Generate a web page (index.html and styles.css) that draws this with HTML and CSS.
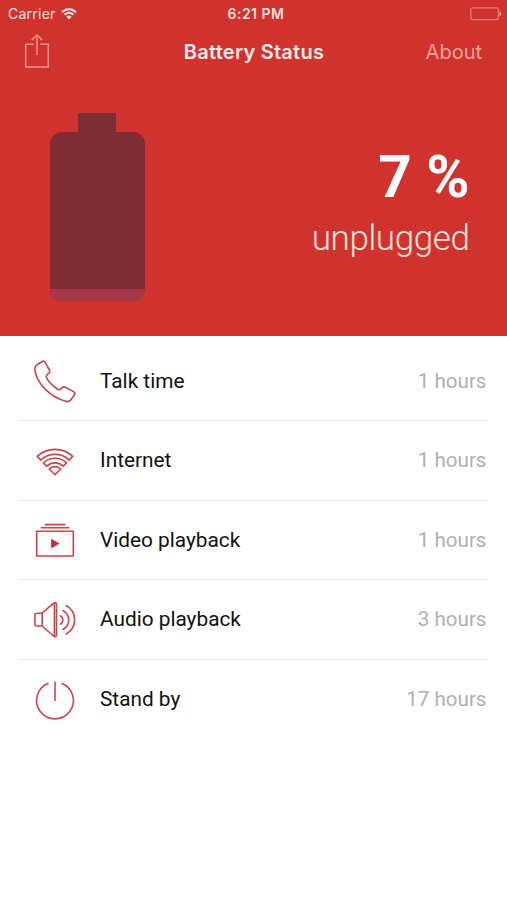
FILE: index.html
```html
<!DOCTYPE html>
<html lang="en">
<head>
<meta charset="utf-8">
<title>Battery Status</title>
<link rel="stylesheet" href="styles.css">
</head>
<body>
<header class="hero">
  <div class="status">
    <div class="carrier"><span>Carrier</span>
      <svg width="16" height="12" viewBox="0 0 16 12" fill="none" stroke="currentColor" stroke-width="2"><path d="M1 4.2Q8-2 15 4.2M3.5 6.8Q8 2.8 12.5 6.8"/><path d="M5.4 8.7Q8 6.5 10.6 8.7L8 11.4Z" fill="currentColor" stroke="none"/></svg>
    </div>
    <div class="clock">6:21 PM</div>
    <svg class="cell" width="32" height="14" viewBox="0 0 32 14" fill="none"><rect x=".8" y=".8" width="27.6" height="11.8" rx="2" stroke="#f07a76" stroke-width="1.2"/><path d="M29.5 4.5Q31.2 5 31.2 6.7T29.5 9Z" fill="#ffc5bd"/></svg>
  </div>
  <nav class="nav">
    <svg class="share" width="26" height="36" viewBox="0 0 26 36" fill="none" stroke="#f6938c" stroke-width="1.5"><path d="M9.8 11.3H1.7V34H24.3V11.3H16.2M13 22V2M7.7 7.2L13 1.8L18.3 7.2"/></svg>
    <h1 class="title">Battery Status</h1>
    <a class="about">About</a>
  </nav>
  <div class="summary">
    <div class="battery"><div class="cap"></div><div class="body"><div class="level"></div></div></div>
    <div class="reading"><div class="percent">7 %</div><div class="state">unplugged</div></div>
  </div>
</header>
<main class="list">
  <div class="row">
    <svg class="icon" viewBox="0 0 50 50"><path d="M12.3 5.5L7.8 8.2Q5 10 4.7 13.2C6.5 28 21 41.5 36.5 45.6Q39.7 46 41.5 43L44.5 38.8Q45.6 37 43.6 35.6L35.5 31.2Q33.7 30.3 32 31.8L30.5 33.2Q29 34.3 27.2 33C23 30 18.5 25.7 16.4 21.7Q15.8 20 17.2 18.7L19 17Q20.2 15.8 19.5 14L15 6.3Q13.9 4.6 12.3 5.5Z"/></svg>
    <span class="name">Talk time</span><span class="time">1 hours</span>
  </div>
  <div class="row">
    <svg class="icon" viewBox="0 0 50 50"><path d="M7.3 20.4A25.7 25.7 0 0 1 42.7 20.4L39.2 24.1A20.6 20.6 0 0 0 10.8 24.1ZM13.5 26.9A16.7 16.7 0 0 1 36.5 26.9L33.3 30.2A12.1 12.1 0 0 0 16.7 30.2ZM19.2 33A8.3 8.3 0 0 1 30.8 33L25 38.7Z"/></svg>
    <span class="name">Internet</span><span class="time">1 hours</span>
  </div>
  <div class="row">
    <svg class="icon" viewBox="0 0 50 50"><path d="M6.7 16.2H43.3V41H6.7ZM10.8 12.7H39.7M14.7 9.6H35.5"/><path class="solid" d="M21.2 23.7V33.5L29.6 28.6Z"/></svg>
    <span class="name">Video playback</span><span class="time">1 hours</span>
  </div>
  <div class="row">
    <svg class="icon" viewBox="0 0 50 50"><path d="M6.8 18.2H12.2V31H6.8Q4.9 31 4.9 29V20.2Q4.9 18.2 6.8 18.2ZM12.2 18.2L23.5 8.2Q26.5 6.5 26.5 9.5V39.7Q26.5 42.7 23.5 41L12.2 31M24.4 7.5V41.5M30 20.5Q32.8 22 32.8 25T30 29.5M32.5 15.2Q38.7 18.5 38.7 25T32.5 34.8M35.8 10.2C47.5 16.5 47.5 33 35.8 39.2"/></svg>
    <span class="name">Audio playback</span><span class="time">3 hours</span>
  </div>
  <div class="row">
    <svg class="icon" viewBox="0 0 50 50"><path d="M18.5 8.3A18.4 18.4 0 1 0 31.5 8.3M25 6.7V26"/></svg>
    <span class="name">Stand by</span><span class="time">17 hours</span>
  </div>
</main>
</body>
</html>
```
FILE: styles.css
```css
* { box-sizing: border-box; }
body { margin: 0; background: #fff; color: #111; font-family: Roboto, sans-serif; }
.hero { height: 335.5px; background: #d0322e; color: #fff; overflow: hidden; }
.status { height: 27px; display: grid; grid-template-columns: 1fr auto 1fr; align-items: center; padding: 0 5px 0 8px; font: 500 13px/27px Inter, sans-serif; color: #ffe0da; }
.carrier { display: flex; align-items: center; gap: 5px; font-weight: 400; font-size: 14px; letter-spacing: .25px; }
.clock { font-weight: 600; font-size: 14px; letter-spacing: .5px; padding-left: 2px; }
.cell { justify-self: end; }
.nav { height: 50px; display: grid; grid-template-columns: 1fr auto 1fr; align-items: center; padding: 0 25px 0 25px; font-family: Inter, sans-serif; }
.title { margin: 0; font-size: 20px; font-weight: 600; line-height: 24px; letter-spacing: .25px; padding-left: 1px; color: #ffebe6; }
.about { justify-self: end; font-size: 20px; line-height: 24px; color: #f9a29b; }
.share { margin: -2px 0 0 -1px; }
.summary { display: flex; justify-content: space-between; padding: 35.5px 37.5px 0 49.5px; }
.battery { width: 95px; display: flex; flex-direction: column; align-items: center; }
.cap { width: 38px; height: 19px; background: #7e2c36; }
.body { width: 95px; height: 169.5px; border-radius: 12px; background: #7e2c36; overflow: hidden; display: flex; align-items: flex-end; }
.level { width: 100%; height: 12.5px; background: #a43848; }
.reading { text-align: right; padding-top: 31px; }
.percent { font-size: 58.5px; font-weight: 700; line-height: 66px; }
.state { font-size: 35px; font-weight: 300; line-height: 44px; margin-top: 7px; letter-spacing: -.4px; color: #ffe3dc; }
.list { padding: 6px 18px 0 19px; }
.row { height: 79.5px; display: flex; align-items: center; padding: 1px 2.5px 0 11px; border-bottom: 1.5px solid #e9e9e9; }
.row:last-child { border-bottom: 0; }
.icon { width: 50px; height: 50px; fill: none; stroke: #c9474a; stroke-width: 1.6; stroke-linejoin: round; }
.solid { fill: #c62f30; stroke: none; }
.name { margin-left: 20px; flex: 1; font-size: 20.8px; line-height: 28px; padding-bottom: 1px; }
.time { font-size: 20.6px; line-height: 28px; padding-bottom: 1px; color: #b0b0b0; }
```
